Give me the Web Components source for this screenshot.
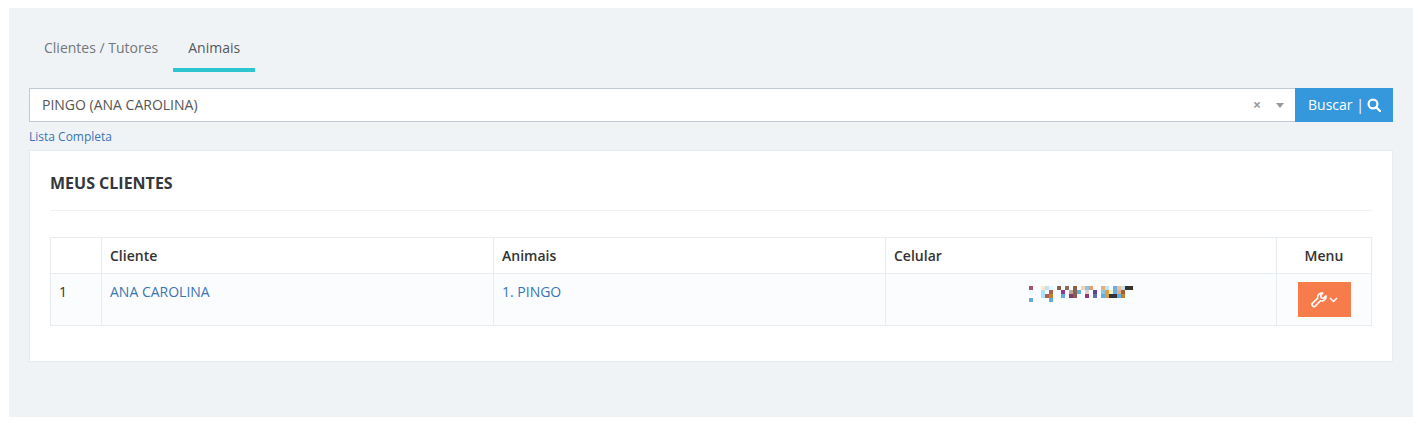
<!DOCTYPE html>
<html lang="pt-BR">
<head>
<meta charset="utf-8">
<title>Meus Clientes</title>
<style>
    html, body { margin: 0; background: #fff; }
    body { padding: 8px 9px; font-family: "Open Sans", "Liberation Sans", sans-serif; font-size: 14px; color: #333; }
</style>
</head>
<body>
<client-page>
    <nav-tabs slot="tabs" active="1" labels="Clientes / Tutores|Animais"></nav-tabs>
    <search-bar slot="search" value="PINGO (ANA CAROLINA)"></search-bar>
    <clients-card slot="card" title="MEUS CLIENTES">
        <clients-table></clients-table>
    </clients-card>
</client-page>

<script>
class ClientPage extends HTMLElement {
    connectedCallback() {
        this.attachShadow({ mode: 'open' });
        this.shadowRoot.innerHTML = `
            <style>
                :host { display: block; height: 409px; box-sizing: border-box; background: #f0f3f6; padding: 20px; }
                .link { display: block; margin: 7px 0 5px; font-size: 12px; line-height: 16px; color: #3a75b4; text-decoration: none; }
            </style>
            <slot name="tabs"></slot>
            <slot name="search"></slot>
            <a class="link" href="#">Lista Completa</a>
            <slot name="card"></slot>
        `;
    }
}
customElements.define('client-page', ClientPage);

class NavTabs extends HTMLElement {
    connectedCallback() {
        this.attachShadow({ mode: 'open' });
        const active = parseInt(this.getAttribute('active')) || 0;
        const labels = this.getAttribute('labels').split('|');
        this.shadowRoot.innerHTML = `
            <style>
                :host { display: flex; margin-bottom: 16px; height: 44px; }
                a { display: block; box-sizing: border-box; height: 44px; padding: 10px 15px 0; line-height: 20px; font-size: 14px; color: #73767b; text-decoration: none; }
                a.on { color: #55585c; border-bottom: 4px solid #2fc5d0; }
            </style>
            ${labels.map((l, i) => `<a href="#" class="${i === active ? 'on' : ''}">${l}</a>`).join('')}
        `;
    }
}
customElements.define('nav-tabs', NavTabs);

class SearchBar extends HTMLElement {
    connectedCallback() {
        this.attachShadow({ mode: 'open' });
        this.shadowRoot.innerHTML = `
            <style>
                :host { display: flex; height: 34px; }
                .box { flex: 1; display: flex; align-items: center; box-sizing: border-box; background: #fff; border: 1px solid #c2cad8; border-right: 0; padding: 0 11px 0 12px; color: #555; }
                .value { flex: 1; margin-top: -2px; }
                .clear { color: #999; font-size: 14px; font-weight: 700; margin-right: 15px; line-height: 1; }
                .caret { width: 0; height: 0; border: 4px solid transparent; border-top: 5px solid #999; border-bottom: 0; }
                button { display: flex; align-items: center; gap: 3px; width: 98px; box-sizing: border-box; border: 0; padding: 0 0 2px 13px; background: #3598dc; color: #fff; font: inherit; font-size: 14px; }
                svg { display: block; margin-top: 2px; }
            </style>
            <div class="box">
                <span class="value">${this.getAttribute('value')}</span>
                <span class="clear">×</span>
                <span class="caret"></span>
            </div>
            <button>Buscar |
                <svg width="14" height="14" viewBox="0 0 14 14" fill="none" stroke="#fff" stroke-width="2.2"><circle cx="6" cy="6" r="4.4"/><path d="M9.2 9.2l3.8 3.8" stroke-linecap="round"/></svg>
            </button>
        `;
    }
}
customElements.define('search-bar', SearchBar);

class ClientsCard extends HTMLElement {
    connectedCallback() {
        this.attachShadow({ mode: 'open' });
        this.shadowRoot.innerHTML = `
            <style>
                :host { display: block; box-sizing: border-box; height: 212px; background: #fff; border: 1px solid #e7ecf1; padding: 0 20px; }
                h2 { margin: 0 0 26px; height: 60px; box-sizing: border-box; padding-top: 21px; border-bottom: 1px solid #eef1f5; font-size: 16px; line-height: 22px; font-weight: 700; color: #32383d; }
            </style>
            <h2>${this.getAttribute('title')}</h2>
            <slot></slot>
        `;
    }
}
customElements.define('clients-card', ClientsCard);

class PixelBlur extends HTMLElement {
    connectedCallback() {
        this.attachShadow({ mode: 'open' });
        const cells = [
            [0,0,'#a5526f'],[3,0,'#fde8c8'],[4,0,'#bfe4f5'],[5,0,'#e4f6fc'],[7,0,'#8a6248'],[9,0,'#8f6a55'],[11,0,'#8a6248'],[13,0,'#f5d5b0'],[14,0,'#8fc3e8'],[15,0,'#e0a070'],[18,0,'#e0b080'],[19,0,'#bde4f5'],[21,0,'#6aaee8'],[22,0,'#f0c090'],[23,0,'#c0e0f0'],[24,0,'#333'],[25,0,'#333'],
            [0,1,'#e8fbff'],[3,1,'#a8e4f8'],[5,1,'#b06050'],[8,1,'#8a3a90'],[10,1,'#c0a0a0'],[11,1,'#8a6248'],[12,1,'#60aee0'],[14,1,'#e0d0d0'],[16,1,'#60439a'],[18,1,'#8fc3e8'],[19,1,'#d8a040'],[20,1,'#fff0c8'],[21,1,'#6aaee8'],[22,1,'#e0b080'],[23,1,'#a06040'],
            [3,2,'#a8e4f8'],[4,2,'#b06050'],[5,2,'#c08030'],[8,2,'#60aee0'],[10,2,'#803a70'],[11,2,'#8a5a50'],[14,2,'#903a80'],[16,2,'#6070b0'],[18,2,'#60aee8'],[19,2,'#d8a040'],[20,2,'#333'],[21,2,'#333'],[22,2,'#60aee8'],[23,2,'#c08030'],
            [0,3,'#60aee0'],[5,3,'#60aee0']
        ];
        this.shadowRoot.innerHTML = `
            <style>:host { display: block; width: 104px; height: 16px; } svg { display: block; }</style>
            <svg width="104" height="16" shape-rendering="crispEdges">
                ${cells.map(c => `<rect x="${c[0] * 4}" y="${c[1] * 4}" width="4" height="4" fill="${c[2]}"/>`).join('')}
            </svg>
        `;
    }
}
customElements.define('pixel-blur', PixelBlur);

class ClientsTable extends HTMLElement {
    connectedCallback() {
        this.attachShadow({ mode: 'open' });
        this.shadowRoot.innerHTML = `
            <style>
                :host { display: block; }
                table { width: 100%; table-layout: fixed; border-collapse: collapse; font-size: 14px; line-height: 19px; color: #333; }
                th, td { border: 1px solid #e7ecf1; padding: 8px; text-align: left; vertical-align: top; }
                th { font-weight: 600; height: 19px; }
                td { height: 35px; background: #fbfcfd; }
                a { color: #3a75b4; text-decoration: none; }
                .menu { text-align: center; }
                .phone { padding: 12px 8px 4px 143px; }
                button { display: inline-flex; align-items: center; justify-content: center; gap: 2px; width: 53px; height: 35px; border: 0; padding: 0; background: #f77c4c; vertical-align: top; }
                svg { display: block; }
            </style>
            <table>
                <colgroup><col style="width:51px"><col style="width:392px"><col style="width:392px"><col style="width:391px"><col></colgroup>
                <tr><th></th><th>Cliente</th><th>Animais</th><th>Celular</th><th class="menu">Menu</th></tr>
                <tr>
                    <td>1</td>
                    <td><a href="#">ANA CAROLINA</a></td>
                    <td><a href="#">1. PINGO</a></td>
                    <td class="phone"><pixel-blur></pixel-blur></td>
                    <td class="menu">
                        <button>
                            <svg width="16" height="16" viewBox="0 0 15 15" fill="none" stroke="#fff" stroke-width="1.5" stroke-linejoin="round"><path d="M14 3.6a4 4 0 0 1-5.2 4.6L4 13.2a1.9 1.9 0 0 1-2.7-2.6L6.3 5.8A4 4 0 0 1 11 1L9 3.4l.6 2 2 .6z"/></svg>
                            <svg width="9" height="6" viewBox="0 0 9 6" fill="none" stroke="#fff" stroke-width="1.4"><path d="M1 1l3.5 3.5L8 1"/></svg>
                        </button>
                    </td>
                </tr>
            </table>
        `;
    }
}
customElements.define('clients-table', ClientsTable);
</script>
</body>
</html>
